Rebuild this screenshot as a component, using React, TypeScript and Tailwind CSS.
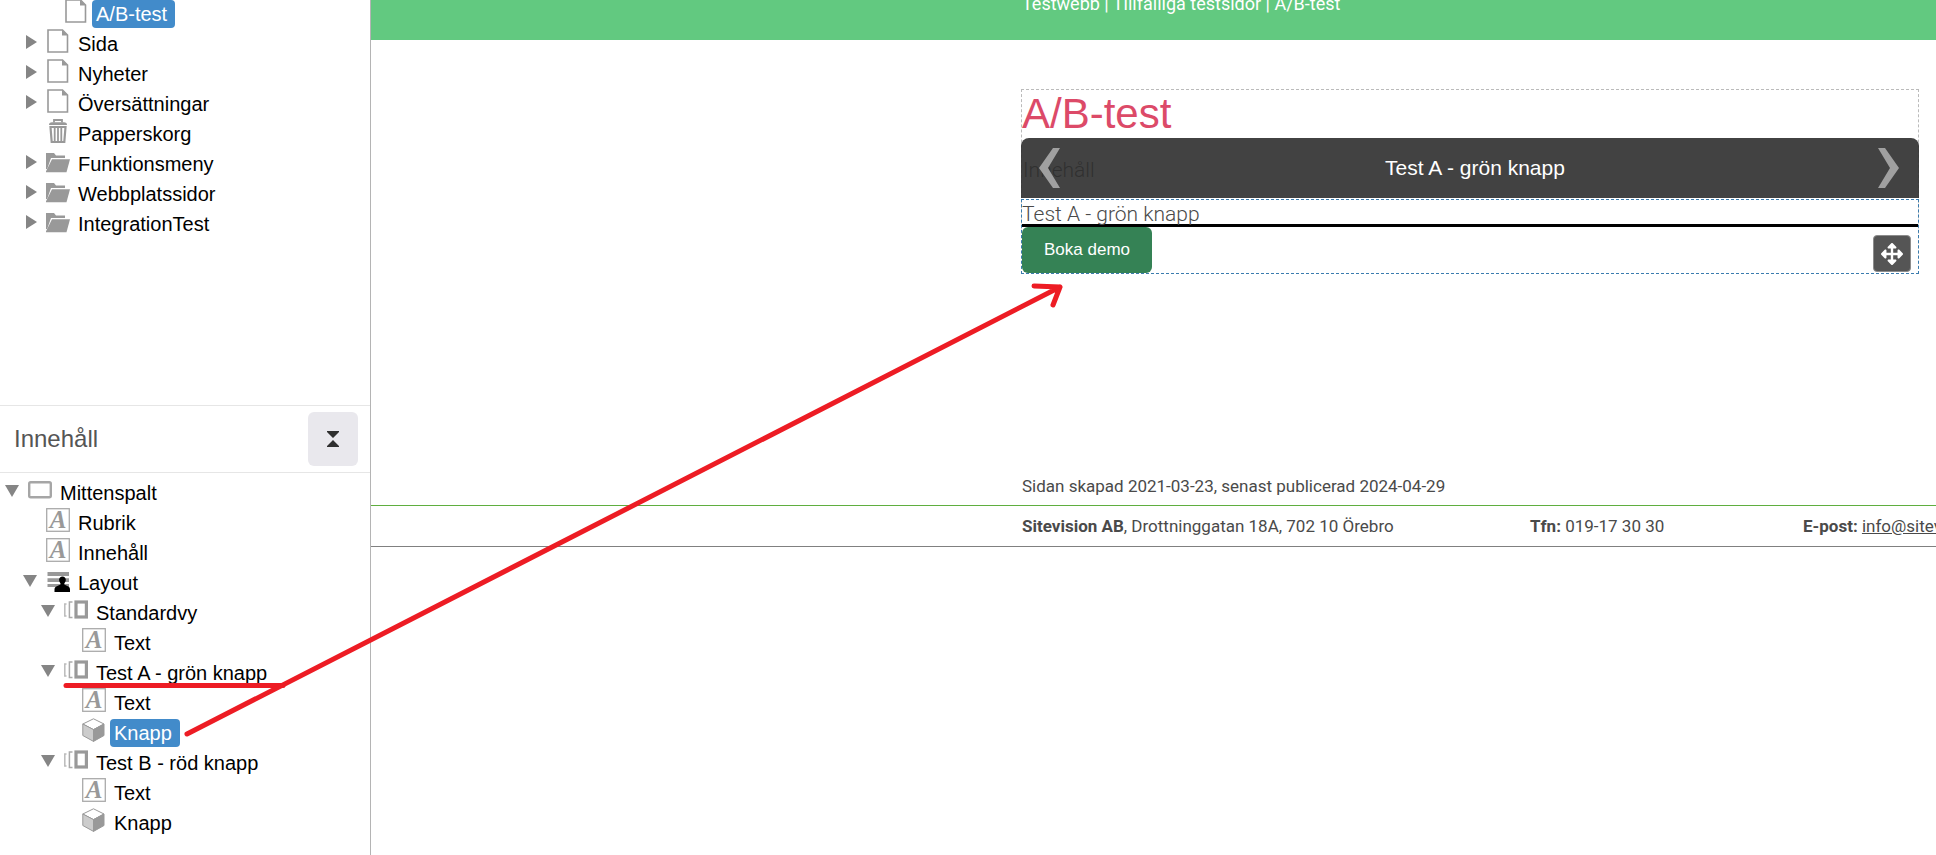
import type React from 'react';
import { FaArrowsAlt } from 'react-icons/fa';

type IconName = 'page' | 'trash' | 'folder' | 'column' | 'text' | 'layout' | 'view' | 'module';

type Node = {
  id: string;
  label: string;
  icon: IconName;
  level: 0 | 1 | 2 | 3;
  arrow?: 'open' | 'closed';
  selected?: boolean;
};

const pages: Node[] = [
  { id: 'ab-test', label: 'A/B-test', icon: 'page', level: 2, selected: true },
  { id: 'sida', label: 'Sida', icon: 'page', level: 1, arrow: 'closed' },
  { id: 'nyheter', label: 'Nyheter', icon: 'page', level: 1, arrow: 'closed' },
  { id: 'oversattningar', label: 'Översättningar', icon: 'page', level: 1, arrow: 'closed' },
  { id: 'papperskorg', label: 'Papperskorg', icon: 'trash', level: 1 },
  { id: 'funktionsmeny', label: 'Funktionsmeny', icon: 'folder', level: 1, arrow: 'closed' },
  { id: 'webbplatssidor', label: 'Webbplatssidor', icon: 'folder', level: 1, arrow: 'closed' },
  { id: 'integrationtest', label: 'IntegrationTest', icon: 'folder', level: 1, arrow: 'closed' },
];

const content: Node[] = [
  { id: 'mittenspalt', label: 'Mittenspalt', icon: 'column', level: 0, arrow: 'open' },
  { id: 'rubrik', label: 'Rubrik', icon: 'text', level: 1 },
  { id: 'innehall', label: 'Innehåll', icon: 'text', level: 1 },
  { id: 'layout', label: 'Layout', icon: 'layout', level: 1, arrow: 'open' },
  { id: 'standardvy', label: 'Standardvy', icon: 'view', level: 2, arrow: 'open' },
  { id: 'standard-text', label: 'Text', icon: 'text', level: 3 },
  { id: 'test-a', label: 'Test A - grön knapp', icon: 'view', level: 2, arrow: 'open' },
  { id: 'a-text', label: 'Text', icon: 'text', level: 3 },
  { id: 'a-knapp', label: 'Knapp', icon: 'module', level: 3, selected: true },
  { id: 'test-b', label: 'Test B - röd knapp', icon: 'view', level: 2, arrow: 'open' },
  { id: 'b-text', label: 'Text', icon: 'text', level: 3 },
  { id: 'b-knapp', label: 'Knapp', icon: 'module', level: 3 },
];

const indent = { 0: 'pl-0', 1: 'pl-[18px]', 2: 'pl-[36px]', 3: 'pl-[54px]' };

export default function App() {
  return (
    <div className="relative flex min-h-screen overflow-hidden bg-white font-['Liberation_Sans',Arial,sans-serif]">
      <aside className="w-[371px] shrink-0 border-r border-[#b4b4b4] text-xl text-black">
        <nav aria-label="Sidor" className="min-h-[406px]">
          <Tree nodes={pages} className="-mt-px" />
        </nav>
        <section>
          <header className="flex items-center justify-between border-y border-[#e6e6e6] py-1.5 pr-3 pl-3.5">
            <h2 className="text-2xl text-[#555]">Innehåll</h2>
            <button type="button" aria-label="Fäll ihop" className="flex h-[54px] w-[50px] items-center justify-center rounded-md bg-[#e9e8ed]">
              <svg viewBox="0 0 12 16" className="h-4 w-3" fill="#2f2f2f">
                <path d="M0 0h12v1L6 7 0 1zM0 16h12v-1L6 9 0 15z" />
              </svg>
            </button>
          </header>
          <Tree nodes={content} className="pt-[5px]" />
        </section>
      </aside>

      <main className="min-w-0 flex-1 overflow-hidden whitespace-nowrap font-[Roboto,sans-serif] text-[#4a4a4a]">
        <div className="flow-root h-10 bg-[#62c980] pl-[651px] text-white">
          <p className="-mt-2 text-lg leading-6">Testwebb | Tillfälliga testsidor | A/B-test</p>
        </div>

        <article className="mt-[49px] mr-[17px] ml-[650px] border border-dashed border-[#bbb]">
          <h1 className="h-12 font-['Liberation_Sans',Arial,sans-serif] text-[42px] leading-12 text-[#dc4a68]">A/B-test</h1>

          <div className="relative -mx-px h-[60px]">
            <p className="pt-4 pl-0.5 text-[21px] leading-8 font-light">Innehåll</p>
            <div className="absolute inset-0 flex items-center justify-between rounded-t-lg bg-[#2d2d2d]/90 pr-5 pl-[18px]">
              <button type="button" aria-label="Föregående">
                <Chevron />
              </button>
              <span className="pl-3 font-['Liberation_Sans',Arial,sans-serif] text-[21px] text-white">Test A - grön knapp</span>
              <button type="button" aria-label="Nästa" className="rotate-180">
                <Chevron />
              </button>
            </div>
          </div>

          <div className="relative -mx-px mt-px -mb-px border border-dashed border-[#3b7cae]">
            <p className="h-6 text-[21px] leading-7 font-light">Test A - grön knapp</p>
            <hr className="border-t-[3px] border-black" />
            <button type="button" className="block h-[46px] rounded-md bg-[#358255] px-[22px] font-['Liberation_Sans',Arial,sans-serif] text-[17px] text-white">
              Boka demo
            </button>
            <button
              type="button"
              aria-label="Flytta"
              className="absolute right-[7px] bottom-px flex h-[37px] w-[38px] items-center justify-center rounded border border-[#8c8c8c] bg-[#555] text-white"
            >
              <FaArrowsAlt size={22} />
            </button>
          </div>
        </article>

        <footer className="mt-[200px] text-[17px] leading-6">
          <p className="border-b border-[#5fae3f] pb-[7px] pl-[651px]">Sidan skapad 2021-03-23, senast publicerad 2024-04-29</p>
          <div className="grid grid-cols-[508px_273px_auto] border-b border-[#808080] py-2 pl-[651px]">
            <p>
              <strong>Sitevision AB</strong>, Drottninggatan 18A, 702 10 Örebro
            </p>
            <p>
              <strong>Tfn:</strong> 019-17 30 30
            </p>
            <p>
              <strong>E-post:</strong>{' '}
              <a href="mailto:info@sitevision.se" className="underline">
                info@sitevision.se
              </a>
            </p>
          </div>
        </footer>
      </main>

      {/* red pen marks on top of everything */}
      <svg
        viewBox="0 0 1100 760"
        className="pointer-events-none absolute top-0 left-0 h-[760px] w-[1100px]"
        fill="none"
        stroke="#ed1c24"
        strokeWidth="5"
        strokeLinecap="round"
        strokeLinejoin="round"
      >
        <path d="M66 685.5H283" />
        <path d="M187 734L1060 287M1034 286L1060 287L1053 305" />
      </svg>
    </div>
  );
}

function Tree({ nodes, className }: { nodes: Node[]; className: string }) {
  return (
    <ul className={className}>
      {nodes.map((node) => (
        <li key={node.id} className={`flex h-[30px] items-start ${indent[node.level]}`}>
          <span className="flex h-[26px] w-7 items-center pl-[5px]">
            {node.arrow ? (
              <button type="button" aria-label={`Visa ${node.label}`}>
                <svg viewBox="0 0 14 14" className="h-3.5 w-3.5" fill="#858585">
                  <path d={node.arrow === 'open' ? 'M0 1h14L7 13z' : 'M3 0v14L14 7z'} />
                </svg>
              </button>
            ) : null}
          </span>
          <NodeIcon name={node.icon} />
          <a
            href={`#${node.id}`}
            className={`mt-px ml-1 h-7 rounded-sm px-[5px] pl-1 leading-7 ${node.selected ? 'bg-[#428bca] pr-2 text-white' : ''}`}
          >
            {node.label}
          </a>
        </li>
      ))}
    </ul>
  );
}

const drawings: Record<IconName, React.ReactNode> = {
  page: (
    <>
      <path d="M2 1h14.5l5 5v17H2z" fill="#fff" stroke="#999" strokeWidth="1.6" />
      <path d="M16 1v5.5h6z" fill="#999" />
    </>
  ),
  trash: (
    <g fill="none" stroke="#999">
      <path d="M8 3.500V1h8v2.500" strokeWidth="1.8" />
      <path d="M3 6C3 4.200 4 3.200 6 3.200h12c2 0 3 1 3 2.800z" fill="#999" stroke="none" />
      <path d="M4.500 8h15l-1.200 15H5.700z" strokeWidth="2.200" />
      <path d="M8.700 8v15M12 8v15M15.300 8v15" strokeWidth="1.8" />
    </g>
  ),
  folder: (
    <g fill="#999">
      <path d="M0 4h8l2 2.500h9V9H5L1.200 20H0z" />
      <path d="M6 10.200h18l-3.500 13H0v-1z" />
    </g>
  ),
  column: <rect x="1.200" y="4.200" width="21.600" height="15" rx="1.500" fill="#fff" stroke="#a6a6a6" strokeWidth="2.400" />,
  text: (
    <>
      <rect x=".7" y=".7" width="22.600" height="22.600" fill="#fff" stroke="#aaa" strokeWidth="1.300" />
      <text x="12" y="20" textAnchor="middle" fontFamily="Liberation Serif, serif" fontSize="25" fontWeight="bold" fontStyle="italic" fill="#999">
        A
      </text>
    </>
  ),
  layout: (
    <>
      <path d="M1.500 4h21.500v4H1.500zM1.500 10.200h21.500v3.800H1.500zM1.500 16h21.500v3H1.500z" fill="#999" />
      <path
        d="M16.500 8.500c2 0 3.300 1.400 3.300 3.300 0 1.500-.6 2.700-1.500 3.600v1.200l4 2c1.200.6 1.700 1.600 1.700 3V24H8.500v-2.400c0-1.400.6-2.400 1.800-3l4.200-2v-1.200c-.8-.9-1.400-2.100-1.400-3.600 0-1.900 1.400-3.300 3.400-3.300z"
        fill="#000"
      />
    </>
  ),
  view: (
    <g fill="none">
      <path d="M2.500 6H.8v12h1.700" stroke="#bbb" strokeWidth="1.500" />
      <path d="M8.500 4H5.400v15.500h3.100" stroke="#aaa" strokeWidth="1.500" />
      <rect x="12" y="4" width="10.400" height="15" stroke="#999" strokeWidth="3.200" />
    </g>
  ),
  module: (
    <g stroke="#999" strokeWidth="1" strokeLinejoin="round">
      <path d="M11.500.8L22 6 11.500 11.600.8 6z" fill="#fff" />
      <path d="M.8 6l10.700 5.600v11.800L.8 17.500z" fill="#ccc" />
      <path d="M22 6v11.500l-10.500 5.900V11.600z" fill="#999" />
    </g>
  ),
};

function NodeIcon({ name }: { name: IconName }) {
  return (
    <svg viewBox="0 0 24 24" className="h-6 w-6 shrink-0" aria-hidden="true">
      {drawings[name]}
    </svg>
  );
}

function Chevron() {
  return (
    <svg viewBox="0 0 21 40" className="h-10 w-[21px]" fill="#a0a0a0">
      <path d="M14 0h7L9 20l12 20h-7L0 20z" />
    </svg>
  );
}
